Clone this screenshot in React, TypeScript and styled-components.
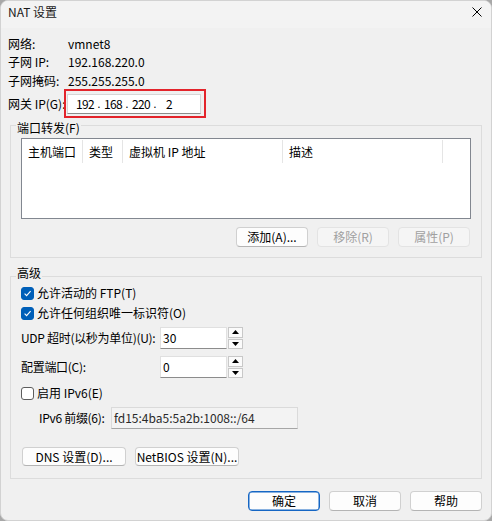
import React from "react";
import styled, { createGlobalStyle, css } from "styled-components";

const GlobalStyle = createGlobalStyle`
  html, body {
    margin: 0;
    padding: 0;
    background: #a8a8a8;
  }
  body {
    font-family: "Noto Sans CJK SC", "Noto Sans", sans-serif;
    font-size: 12px;
    color: #000;
  }
  * {
    box-sizing: border-box;
  }
`;

const StyledWindow = styled.div`
  width: 492px;
  height: 521px;
  background: #f0f0f0;
  border: 1px solid #d2d2d2;
  border-radius: 8px;
  overflow: hidden;
  display: flex;
  flex-direction: column;
`;

const StyledTitleBar = styled.div`
  height: 27px;
  flex: none;
  background: #f3f3f3;
  display: flex;
  justify-content: space-between;
  align-items: flex-start;
  padding: 3px 9px 0 7px;
  line-height: 16px;
  color: #1a1a1a;
`;

const StyledClose = styled.svg`
  margin-top: 3px;
`;

const StyledContent = styled.div`
  padding: 0 9px;
  display: flex;
  flex-direction: column;
`;

const StyledInfo = styled.div`
  margin-left: -2px;
  padding-top: 7px;
  display: flex;
  flex-direction: column;
`;

const StyledInfoRow = styled.div<{ $h: number }>`
  display: flex;
  align-items: center;
  height: ${(p) => p.$h}px;
  line-height: 16px;
`;

const StyledInfoLabel = styled.span`
  width: 60px;
  flex: none;
`;

const StyledGatewayRow = styled.div`
  display: flex;
  align-items: center;
  height: 20px;
  margin-top: 4px;
  line-height: 16px;
`;

const StyledGatewayLabel = styled.span`
  width: 59px;
  flex: none;
`;

const StyledIpField = styled.div`
  position: relative;
  width: 134px;
  height: 20px;
  background: #fff;
  border: 1px solid #d6d6d6;
  border-bottom-color: #8c8c8c;
  display: flex;
  align-items: center;
  padding-left: 7px;
  &::after {
    content: "";
    position: absolute;
    left: -4px;
    top: -6px;
    right: -6px;
    bottom: -5px;
    border: 2px solid #e3242b;
  }
`;

const StyledOctet = styled.span`
  width: 20px;
  display: flex;
  justify-content: center;
  letter-spacing: -0.6px;
`;

const StyledDot = styled.span`
  width: 8px;
  display: flex;
  justify-content: center;
  font-family: "Liberation Sans", sans-serif;
`;

const StyledGroup = styled.fieldset<{ $top: number; $bottom: number }>`
  margin: 0;
  min-width: 0;
  border: 1px solid #dcdcdc;
  padding: ${(p) => p.$top}px 10px ${(p) => p.$bottom}px 10px;
`;

const StyledLegend = styled.legend<{ $above?: boolean }>`
  margin-left: -5px;
  line-height: 16px;
  padding: ${(p) => (p.$above ? "0 1px 6px" : "5px 1px 0")};
  color: #000;
`;

const StyledList = styled.div`
  height: 81px;
  background: #fff;
  border: 1px solid #828790;
`;

const StyledListHeader = styled.div`
  display: grid;
  grid-template-columns: 61px 40px 160px 160px;
  height: 24px;
`;

const StyledHeaderCell = styled.div`
  margin-top: 1px;
  height: 23px;
  padding-left: 6px;
  border-right: 1px solid #e5e5e5;
  line-height: 23px;
  color: #000;
  white-space: nowrap;
`;

const StyledButtonRow = styled.div<{ $justify: "start" | "end" }>`
  display: flex;
  gap: 9px;
  justify-content: ${(p) => (p.$justify === "end" ? "flex-end" : "flex-start")};
`;

const StyledButton = styled.button<{ $w: number; $h?: number; $primary?: boolean }>`
  width: ${(p) => p.$w}px;
  height: ${(p) => p.$h ?? 20}px;
  padding: 0;
  font: inherit;
  line-height: 16px;
  color: #000;
  background: #fdfdfd;
  border: 1px solid #d0d0d0;
  border-bottom-color: #b4b4b4;
  border-radius: 4px;
  white-space: nowrap;
  ${(p) =>
    p.$primary &&
    css`
      border-color: #1566c4;
      box-shadow: inset 0 0 0 0.5px #1566c4;
    `}
  &:disabled {
    color: #a0a0a0;
    background: #f5f5f5;
    border-color: #e3e3e3;
  }
`;

const StyledCheckRow = styled.label<{ $first?: boolean }>`
  display: flex;
  align-items: center;
  gap: 3px;
  height: 20px;
  line-height: 16px;
  ${(p) => p.$first && "margin-top: -4px;"}
`;

const StyledCheckBox = styled.span<{ $checked: boolean }>`
  width: 13px;
  height: 13px;
  flex: none;
  border-radius: 3px;
  display: flex;
  align-items: center;
  justify-content: center;
  ${(p) =>
    p.$checked
      ? css`
          background: #005fb8;
          border: 1px solid #005fb8;
        `
      : css`
          background: #fff;
          border: 1px solid #5d5d5d;
        `}
`;

const StyledFieldRow = styled.div<{ $mt: number; $indent?: number }>`
  display: flex;
  align-items: center;
  height: 22px;
  margin-top: ${(p) => p.$mt}px;
  padding-left: ${(p) => p.$indent ?? 0}px;
  line-height: 16px;
`;

const StyledFieldLabel = styled.span<{ $w: number }>`
  width: ${(p) => p.$w}px;
  flex: none;
  white-space: nowrap;
  letter-spacing: -0.3px;
`;

const StyledNumberInput = styled.div`
  width: 67px;
  height: 22px;
  background: #fff;
  border: 1px solid #e0e0e0;
  border-bottom-color: #8c8c8c;
  padding-left: 2px;
  line-height: 20px;
`;

const StyledSpinner = styled.div`
  width: 17px;
  height: 22px;
  display: flex;
  flex-direction: column;
  gap: 1px;
  padding: 0 1px;
`;

const StyledSpinButton = styled.div`
  flex: 1;
  background: #fbfbfb;
  border: 1px solid #c8c8c8;
  display: flex;
  align-items: center;
  justify-content: center;
`;

const StyledPrefixField = styled.div`
  width: 187px;
  height: 22px;
  background: #f3f3f3;
  border: 1px solid #dadada;
  border-bottom-color: #a6a6a6;
  padding-left: 2px;
  line-height: 20px;
  color: #2a2a2a;
`;

const Check: React.FC<{ checked: boolean }> = ({ checked }) => (
  <StyledCheckBox $checked={checked}>
    {checked && (
      <svg width="9" height="9" viewBox="0 0 9 9">
        <path d="M1.6 4.6 L3.6 6.6 L7.6 2.2" fill="none" stroke="#fff" strokeWidth="1.1" />
      </svg>
    )}
  </StyledCheckBox>
);

const Spinner: React.FC = () => (
  <StyledSpinner>
    <StyledSpinButton>
      <svg width="7" height="4" viewBox="0 0 7 4">
        <path d="M0 4 L3.5 0 L7 4 Z" fill="#000" />
      </svg>
    </StyledSpinButton>
    <StyledSpinButton>
      <svg width="7" height="4" viewBox="0 0 7 4">
        <path d="M0 0 L7 0 L3.5 4 Z" fill="#000" />
      </svg>
    </StyledSpinButton>
  </StyledSpinner>
);

const info = [
  { label: "网络:", value: "vmnet8", h: 18 },
  { label: "子网 IP:", value: "192.168.220.0", h: 18 },
  { label: "子网掩码:", value: "255.255.255.0", h: 19 },
];

const columns = ["主机端口", "类型", "虚拟机 IP 地址", "描述"];
const octets = ["192", "168", "220", "2"];

const App: React.FC = () => {
  return (
    <>
      <GlobalStyle />
      <StyledWindow>
        <StyledTitleBar>
          <span>NAT 设置</span>
          <StyledClose width="10" height="10" viewBox="0 0 10 10">
            <path d="M0.5 0.5 L9.5 9.5 M9.5 0.5 L0.5 9.5" stroke="#000" strokeWidth="1" />
          </StyledClose>
        </StyledTitleBar>
        <StyledContent>
          <StyledInfo>
            {info.map((row) => (
              <StyledInfoRow key={row.label} $h={row.h}>
                <StyledInfoLabel>{row.label}</StyledInfoLabel>
                <span>{row.value}</span>
              </StyledInfoRow>
            ))}
            <StyledGatewayRow>
              <StyledGatewayLabel>网关 IP(G):</StyledGatewayLabel>
              <StyledIpField>
                {octets.map((o, i) => (
                  <React.Fragment key={i}>
                    <StyledOctet>{o}</StyledOctet>
                    {i < octets.length - 1 && <StyledDot>.</StyledDot>}
                  </React.Fragment>
                ))}
              </StyledIpField>
            </StyledGatewayRow>
          </StyledInfo>

          <StyledGroup $top={2} $bottom={10} style={{ marginTop: 1 }}>
            <StyledLegend>端口转发(F)</StyledLegend>
            <StyledList>
              <StyledListHeader>
                {columns.map((c) => (
                  <StyledHeaderCell key={c}>{c}</StyledHeaderCell>
                ))}
              </StyledListHeader>
            </StyledList>
            <StyledButtonRow $justify="end" style={{ marginTop: 8, paddingRight: 1 }}>
              <StyledButton $w={72}>添加(A)...</StyledButton>
              <StyledButton $w={72} disabled>
                移除(R)
              </StyledButton>
              <StyledButton $w={72} disabled>
                属性(P)
              </StyledButton>
            </StyledButtonRow>
          </StyledGroup>

          <StyledGroup $top={0} $bottom={12} style={{ marginTop: 7 }}>
            <StyledLegend $above>高级</StyledLegend>
            <StyledCheckRow $first>
              <Check checked />
              允许活动的 FTP(T)
            </StyledCheckRow>
            <StyledCheckRow>
              <Check checked />
              允许任何组织唯一标识符(O)
            </StyledCheckRow>
            <StyledFieldRow $mt={4}>
              <StyledFieldLabel $w={139}>UDP 超时(以秒为单位)(U):</StyledFieldLabel>
              <StyledNumberInput>30</StyledNumberInput>
              <Spinner />
            </StyledFieldRow>
            <StyledFieldRow $mt={7}>
              <StyledFieldLabel $w={139}>配置端口(C):</StyledFieldLabel>
              <StyledNumberInput>0</StyledNumberInput>
              <Spinner />
            </StyledFieldRow>
            <StyledCheckRow style={{ marginTop: 5 }}>
              <Check checked={false} />
              启用 IPv6(E)
            </StyledCheckRow>
            <StyledFieldRow $mt={4} $indent={18}>
              <StyledFieldLabel $w={72}>IPv6 前缀(6):</StyledFieldLabel>
              <StyledPrefixField>fd15:4ba5:5a2b:1008::/64</StyledPrefixField>
            </StyledFieldRow>
            <StyledButtonRow $justify="start" style={{ marginTop: 18, paddingLeft: 1 }}>
              <StyledButton $w={104} $h={19}>
                DNS 设置(D)...
              </StyledButton>
              <StyledButton $w={104} $h={19}>
                NetBIOS 设置(N)...
              </StyledButton>
            </StyledButtonRow>
          </StyledGroup>

          <StyledButtonRow $justify="end" style={{ marginTop: 12 }}>
            <StyledButton $w={72} $primary>
              确定
            </StyledButton>
            <StyledButton $w={72}>取消</StyledButton>
            <StyledButton $w={72}>帮助</StyledButton>
          </StyledButtonRow>
        </StyledContent>
      </StyledWindow>
    </>
  );
};

export default App;
